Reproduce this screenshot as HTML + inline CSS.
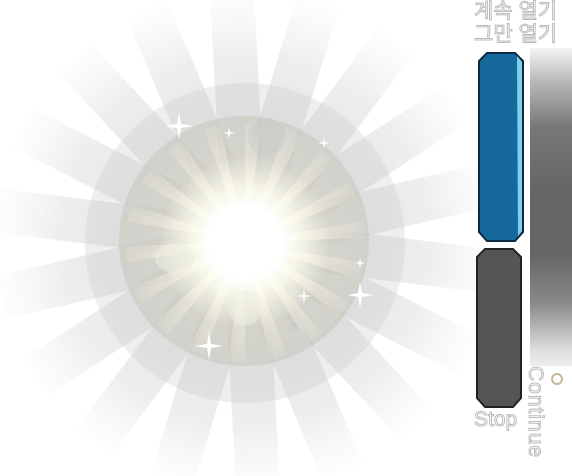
<!DOCTYPE html>
<html><head><meta charset="utf-8"><style>
html,body{margin:0;padding:0;background:#fff;width:572px;height:476px;overflow:hidden;position:relative;font-family:"Liberation Sans","Noto Sans CJK KR",sans-serif}
.abs{position:absolute}
.d2{left:119px;top:116px;width:250px;height:250px;border-radius:50%;background:rgba(190,188,175,.4)}
.innerrays{left:125px;top:122px;width:240px;height:240px;border-radius:50%;
background:repeating-conic-gradient(from 0deg,rgba(250,248,228,.75) 0 8deg,rgba(235,232,210,.25) 8deg 20deg);
-webkit-mask:radial-gradient(circle,#000 20%,rgba(0,0,0,.5) 55%,transparent 78%);
mask:radial-gradient(circle,#000 20%,rgba(0,0,0,.5) 55%,transparent 78%)}
.glow{left:160px;top:157px;width:170px;height:170px;border-radius:50%;background:radial-gradient(circle,#fff 0,#fff 30%,rgba(255,255,240,.8) 45%,rgba(250,248,225,0) 72%)}
.txt{color:#fff;-webkit-text-stroke:1px #bbb;font-size:21px;line-height:23px;white-space:nowrap}
.bar{left:530px;top:48px;width:42px;height:318px;background:linear-gradient(#f4f4f4 0,#bbb 10%,#777 25%,#666 45%,#666 65%,#888 80%,#ddd 95%,#eee 100%)}
</style></head><body>
<svg class="abs" style="left:0;top:0" width="572" height="476">
<defs><radialGradient id="rg" gradientUnits="userSpaceOnUse" cx="0" cy="0" r="250">
<stop offset="0.5" stop-color="#c8c8c8" stop-opacity=".45"/>
<stop offset="0.75" stop-color="#d0d0d0" stop-opacity=".35"/>
<stop offset="1" stop-color="#e0e0e0" stop-opacity=".05"/></radialGradient></defs>
<g transform="translate(245 241)" fill="url(#rg)">
<rect x="-22" y="-250" width="44" height="250" transform="rotate(-3)"/>
<rect x="-22" y="-250" width="44" height="250" transform="rotate(17)"/>
<rect x="-22" y="-250" width="44" height="250" transform="rotate(37)"/>
<rect x="-22" y="-250" width="44" height="250" transform="rotate(57)"/>
<rect x="-22" y="-250" width="44" height="250" transform="rotate(77)"/>
<rect x="-22" y="-250" width="44" height="250" transform="rotate(97)"/>
<rect x="-22" y="-250" width="44" height="250" transform="rotate(117)"/>
<rect x="-22" y="-250" width="44" height="250" transform="rotate(137)"/>
<rect x="-22" y="-250" width="44" height="250" transform="rotate(157)"/>
<rect x="-22" y="-250" width="44" height="250" transform="rotate(177)"/>
<rect x="-22" y="-250" width="44" height="250" transform="rotate(197)"/>
<rect x="-22" y="-250" width="44" height="250" transform="rotate(217)"/>
<rect x="-22" y="-250" width="44" height="250" transform="rotate(237)"/>
<rect x="-22" y="-250" width="44" height="250" transform="rotate(257)"/>
<rect x="-22" y="-250" width="44" height="250" transform="rotate(277)"/>
<rect x="-22" y="-250" width="44" height="250" transform="rotate(297)"/>
<rect x="-22" y="-250" width="44" height="250" transform="rotate(317)"/>
<rect x="-22" y="-250" width="44" height="250" transform="rotate(337)"/>
</g>
<circle cx="245" cy="243" r="160" fill="rgba(205,205,205,.35)"/>
</svg>
<div class="abs d2"></div>
<div class="abs innerrays"></div>
<div class="abs glow"></div>
<div class="abs" style="left:248px;top:118px;width:38px;height:38px;border-radius:50%;background:rgba(200,200,200,.4)"></div>
<div class="abs" style="left:155px;top:243px;width:40px;height:30px;border-radius:50%;background:rgba(240,240,225,.5)"></div>
<div class="abs" style="left:228px;top:290px;width:35px;height:35px;border-radius:50%;background:rgba(240,240,225,.5)"></div>
<svg class="abs" style="left:0;top:0" width="470" height="476">
<g fill="#fff">
<path d="M179 112 L181 124 L193 126 L181 128 L179 140 L177 128 L165 126 L177 124Z"/>
<path d="M229 127 L230 132 L235 133 L230 134 L229 139 L228 134 L223 133 L228 132Z"/>
<path d="M324 137 L325 142 L330 143 L325 144 L324 149 L323 144 L318 143 L323 142Z"/>
<path d="M360 258 L361 262 L365 263 L361 264 L360 268 L359 264 L355 263 L359 262Z"/>
<path d="M360 282 L362 293 L373 295 L362 297 L360 308 L358 297 L347 295 L358 293Z"/>
<path d="M304 288 L305 295 L312 296 L305 297 L304 304 L303 297 L296 296 L303 295Z"/>
<path d="M209 332 L211 344 L223 346 L211 348 L209 360 L207 348 L195 346 L207 344Z"/>
</g>
<circle cx="293" cy="326" r="4" fill="rgba(200,200,200,.6)"/>
</svg>
<div class="abs txt" style="left:474px;top:0">계속 열기</div>
<div class="abs txt" style="left:474px;top:23px">그만 열기</div>
<div class="abs bar"></div>
<svg class="abs" style="left:474px;top:50px" width="56" height="362">
<path d="M13 3 L41 3 L49 11 L49 182 L41 191 L13 191 L5 182 L5 11Z" fill="#16699b" stroke="#0a2a40" stroke-width="2"/>
<path d="M43 6 L48 12 L48 181 L44 186Z" fill="#7fd0f0"/>
<path d="M11 199 L39 199 L47 207 L47 348 L39 357 L11 357 L3 348 L3 207Z" fill="#555" stroke="#222" stroke-width="2"/>
</svg>
<div class="abs" style="left:551px;top:373px;width:8px;height:8px;border-radius:50%;background:#fff;border:2px solid #c8b89a"></div>
<div class="abs txt" style="left:474px;top:408px">Stop</div>
<div class="abs txt" style="left:523px;top:366px;transform-origin:0 0;transform:translate(24px,0) rotate(90deg);letter-spacing:1px">Continue</div>
</body></html>
